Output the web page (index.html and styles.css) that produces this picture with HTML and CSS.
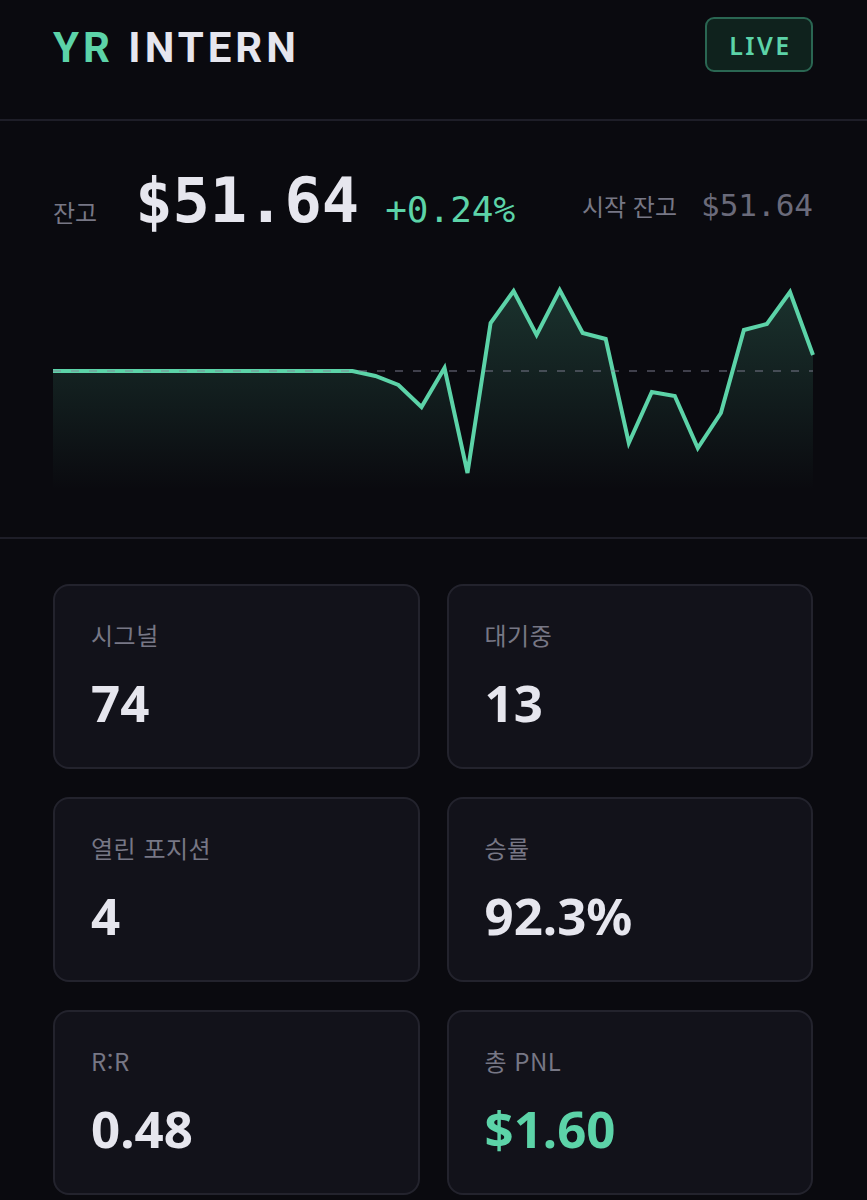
FILE: index.html
```html
<!DOCTYPE html>
<html lang="ko">
<head>
<meta charset="utf-8">
<title>YR INTERN</title>
<link rel="stylesheet" href="styles.css">
</head>
<body>
<header class="topbar">
  <div class="brand"><span class="brand-accent">YR</span> INTERN</div>
  <div class="live-badge">LIVE</div>
</header>

<section class="balance">
  <div class="balance-row">
    <div class="balance-main">
      <span class="label">잔고</span>
      <span class="big-amount">$51.64</span>
      <span class="change">+0.24%</span>
    </div>
    <div class="balance-start">
      <span class="label">시작 잔고</span>
      <span class="start-amount">$51.64</span>
    </div>
  </div>
  <svg class="chart" width="760" height="230" viewBox="0 0 760 230">
    <defs>
      <linearGradient id="fillGrad" x1="0" y1="0" x2="0" y2="1">
        <stop offset="0" stop-color="#5cd3a8" stop-opacity="0.2"/>
        <stop offset="1" stop-color="#5cd3a8" stop-opacity="0"/>
      </linearGradient>
    </defs>
    <path class="area" d="M0,101 L299.4,101 L322.4,106 L345.4,115 L368.5,137 L391.5,98 L414.5,203 L437.6,53 L460.6,21 L483.6,65 L506.7,20 L529.7,63 L552.7,69 L575.8,173 L598.8,122 L621.8,126 L644.8,178 L667.9,143 L690.9,60 L713.9,54 L737,22 L760,85 L760,220 L0,220 Z"/>
    <polyline class="line" points="0,101 299.4,101 322.4,106 345.4,115 368.5,137 391.5,98 414.5,203 437.6,53 460.6,21 483.6,65 506.7,20 529.7,63 552.7,69 575.8,173 598.8,122 621.8,126 644.8,178 667.9,143 690.9,60 713.9,54 737,22 760,85"/>
    <line class="ref" x1="0" y1="101" x2="760" y2="101"/>
  </svg>
</section>

<section class="stats">
  <div class="card">
    <div class="card-label">시그널</div>
    <div class="card-value">74</div>
  </div>
  <div class="card">
    <div class="card-label">대기중</div>
    <div class="card-value">13</div>
  </div>
  <div class="card">
    <div class="card-label">열린 포지션</div>
    <div class="card-value">4</div>
  </div>
  <div class="card">
    <div class="card-label">승률</div>
    <div class="card-value">92.3%</div>
  </div>
  <div class="card">
    <div class="card-label">R:R</div>
    <div class="card-value">0.48</div>
  </div>
  <div class="card">
    <div class="card-label">총 PNL</div>
    <div class="card-value positive">$1.60</div>
  </div>
</section>
</body>
</html>
```

FILE: styles.css
```css
* { box-sizing: border-box; }

html, body {
  margin: 0;
  padding: 0;
  background: #0a0a0f;
  color: #e6e6ee;
  font-family: "Noto Sans", "Noto Sans CJK KR", sans-serif;
}

.topbar {
  display: flex;
  justify-content: space-between;
  align-items: center;
  height: 121px;
  padding: 17px 54px 47px 53px;
  border-bottom: 2px solid #1e1e28;
}

.brand {
  font-family: Roboto, "Noto Sans", sans-serif;
  font-weight: 700;
  font-size: 42px;
  line-height: 50px;
  letter-spacing: 4px;
  color: #e6e6ee;
  padding-top: 6px;
}

.brand-accent { color: #5cd3a8; }

.live-badge {
  width: 108px;
  height: 55px;
  display: flex;
  align-items: center;
  justify-content: center;
  border: 2px solid #2a6652;
  border-radius: 9px;
  background: #0f221d;
  color: #5cd3a8;
  font-family: "Noto Sans", sans-serif;
  font-weight: 600;
  font-size: 25px;
  letter-spacing: 2.5px;
  padding-left: 3px;
}

.balance {
  padding: 50px 54px 37px 53px;
  border-bottom: 2px solid #1e1e28;
}

.balance-row {
  display: flex;
  justify-content: space-between;
  align-items: center;
  height: 60px;
}

.balance-main {
  display: flex;
  align-items: baseline;
}

.balance-start {
  display: flex;
  align-items: baseline;
  line-height: 36px;
  margin-top: 8px;
}

.label {
  font-family: "Noto Sans CJK KR", sans-serif;
  font-size: 24px;
  color: #777785;
}

.big-amount {
  font-family: "DejaVu Sans Mono", monospace;
  font-weight: 700;
  font-size: 62px;
  line-height: 60px;
  color: #e6e6ee;
  margin-left: 38px;
}

.change {
  font-family: "DejaVu Sans Mono", monospace;
  font-size: 36px;
  color: #5cd3a8;
  margin-left: 26px;
}

.start-amount {
  font-family: "DejaVu Sans Mono", monospace;
  font-size: 31px;
  color: #6a6a7a;
  margin-left: 24px;
}

.chart {
  display: block;
  margin-top: 39px;
  overflow: visible;
}

.chart .area { fill: url(#fillGrad); }

.chart .line {
  fill: none;
  stroke: #5cd3a8;
  stroke-width: 4;
  stroke-linejoin: miter;
}

.chart .ref {
  stroke: rgba(130, 130, 150, 0.45);
  stroke-width: 2;
  stroke-dasharray: 8 10;
}

.stats {
  display: grid;
  grid-template-columns: 1fr 1fr;
  column-gap: 27px;
  row-gap: 28px;
  padding: 45px 54px 40px 53px;
}

.card {
  background: #12121a;
  border: 2px solid #23232d;
  border-radius: 16px;
  padding: 33px 36px 36px;
  height: 185px;
}

.card-label {
  font-family: "Noto Sans CJK KR", sans-serif;
  font-size: 24px;
  line-height: 32px;
  letter-spacing: 0.5px;
  color: #777785;
}

.card-value {
  font-family: "Noto Sans", "Noto Sans CJK KR", sans-serif;
  font-weight: 700;
  font-size: 51px;
  line-height: 60px;
  margin-top: 21px;
  color: #e6e6ee;
}

.card-value.positive { color: #5cd3a8; }
```
